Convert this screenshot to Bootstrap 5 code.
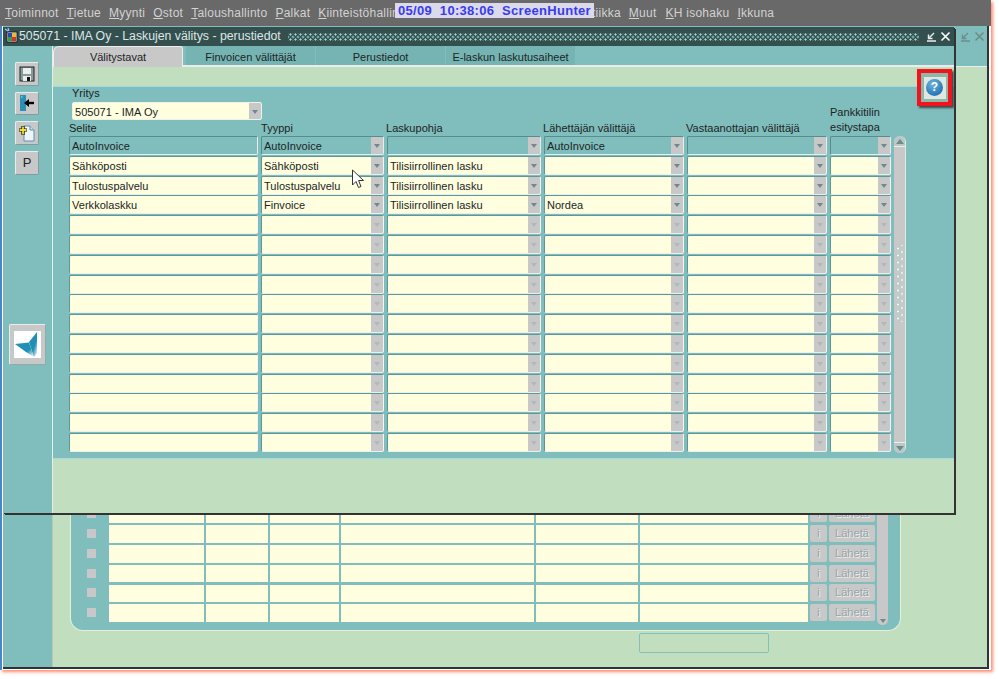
<!DOCTYPE html>
<html lang="fi">
<head>
<meta charset="utf-8">
<title>Laskujen välitys</title>
<link rel="stylesheet" href="https://cdn.jsdelivr.net/npm/bootstrap@5.3.0/dist/css/bootstrap.min.css">
<style>
:root{--teal:#80bdbd;--teal2:#76b4b4;--green:#c1dfbf;--cream:#ffffe0;--gray:#c8c8c8}
html,body{margin:0;background:#fff;overflow:hidden}
body{font-family:"Liberation Sans",Arial,sans-serif;font-size:11px;letter-spacing:.03px;color:#1c2424;width:999px;height:679px;position:relative}
.frame{width:991px;height:670px;box-shadow:2px 2px 3px #ff8a70;border-left:2px solid #4a86c8}
.menubar{height:26px;background:#696969;color:#d2d2d2;font-size:12px;line-height:27px;margin-left:-2px;padding-left:5px;letter-spacing:.25px;gap:8px}
.menubar u{text-decoration-thickness:1px;text-underline-offset:1px}
.menu-hide{margin-left:185px}
.menu-kh{margin-left:1px}
.hunter{position:absolute;left:395px;top:3px;width:199px;height:15px;background:#dadaea;color:#3a3af0;font-weight:700;font-size:13px;line-height:15px;white-space:pre;padding-left:3px;letter-spacing:.3px}
.backwin{margin:0 2px 0 1px;height:643px;border-right:2px solid #333;border-bottom:2px solid #333}
.win-title{height:20px;background:var(--teal)}
.back-strip{height:21px;background:var(--teal);border-bottom:1px solid #e8f0e8}
.win-btns{gap:3px;padding-right:3px}
.back-btns{gap:3px;padding-right:2px}
.win-btns svg{display:block}
.back-rail{width:50px;background:var(--teal);border-right:1px solid #b8c8b8}
.back-main{background:var(--green)}
.back-panel{margin-left:17px;width:831px;background:var(--teal);border:solid #e4f0d8;border-width:0 1px 1px 1px;border-radius:0 0 13px 13px;padding:0 0 6px 16px}
.back-grid{display:grid;grid-template-columns:20px 95px 62px 69px 193px 102px 168px 17px 46px 11px;column-gap:2px;grid-auto-rows:19.8px}
.bullet{width:9px;height:9px;background:var(--gray);margin-top:4px}
.bcell{background:var(--cream);height:17.6px;margin-top:.2px}
.bbtn{background:var(--gray);height:17px;border-radius:2px;font-size:11px;text-align:center;line-height:17px;color:#96a6a6;text-shadow:1px 1px 0 #eee}
.bscroll{grid-column:10;grid-row:1/span 6;background:var(--gray);border-radius:0 0 6px 6px;display:flex;flex-direction:column;justify-content:flex-end;align-items:center;margin-bottom:-1px}
.bempty{margin-left:586px;margin-top:2px;margin-bottom:14px;width:130px;height:20px;border:1px solid #84c0b8;border-radius:2px}
.frontwin{position:absolute;left:3px;top:27px;width:951px;height:486px;box-shadow:1px 1px 0 #333,2px 2px 0 #333}
.front-title{height:19px;background:#33504f;color:#dfe6e6;font-size:12.3px;letter-spacing:0;line-height:19px;padding-left:16px;gap:7px;position:relative}
.sysicon{position:absolute;left:1px;top:1px}
.dots{height:8px;background-image:radial-gradient(circle,#a4dcd8 0.9px,transparent 1.2px),radial-gradient(circle,#a4dcd8 0.9px,transparent 1.2px);background-size:5px 5px;background-position:0 -1px,2.5px 1.5px}
.front-body{height:467px}
.rail{width:50px;background:var(--teal);border-right:1px solid #e8eeee;padding:16px 0 0 12px;gap:6.2px}
.rbtn{width:24px;height:23.5px;padding:0;background:var(--gray);border:1px solid;border-color:#e6eeee #7f9d9d #7f9d9d #e6eeee;border-radius:2px;font-size:13px;line-height:20px;color:#222;--bs-btn-hover-bg:var(--gray)}
.rbtn svg{display:block;margin:1px auto}
.logo-btn{width:37px;height:41px;margin:143px 0 0 -6px;padding:0 4px;background:var(--gray);border:1px solid;border-color:#e6eeee #8fabab #8fabab #e6eeee;border-radius:2px;--bs-btn-hover-bg:var(--gray)}
.logo-btn svg{display:block;background:#fff}
.main-col{flex:1;background:var(--green);position:relative}
.tabbar{height:21px;background:var(--teal);border-bottom:2px solid #e8eeee;flex-wrap:nowrap;margin:0}
.tabbar .nav-link{height:19px;padding:0;line-height:22px;font-size:11px;letter-spacing:0;color:#1c2424;text-align:center;background:var(--teal2);border-radius:0;margin:0 1px 0 0;width:129px}
.tabbar .nav-link.active{background:var(--gray);width:130px;margin-right:3px;height:21px;border-top:1px solid #eee;border-left:1px solid #eee;border-right:1px solid #eee;border-radius:6px 3px 0 0;line-height:21px}
.green-strip{height:19px}
.panel-main{height:373px;background:var(--teal);border-top:1px solid #a8d8e0;border-bottom:1px solid #a8d8e0;padding:0 0 0 16px}
.fgrid{display:grid;grid-template-columns:189px 123px 154px 140px 140px 61px 12px;column-gap:3px;grid-template-rows:34px 15px;grid-auto-rows:19.8px}
.yr{grid-column:1/span 3;padding:0 0 0 3px}
.yr-label{height:15px;line-height:12px}
.lbl{line-height:15px;white-space:nowrap}
.lbl-m{margin-left:-1px}
.lbl-p{grid-column:6;grid-row:1/span 2;align-self:end;margin-bottom:1px}
.fld{height:19px;background:var(--cream);border:1px solid;border-color:#5d9898 #f4f4f0 #eeeeea #5d9898;border-radius:2px;line-height:17px;padding-left:2px;white-space:nowrap;overflow:hidden;display:flex;justify-content:space-between}
.fld.qry{background:var(--teal);border-color:#5a8c8c #e4eeee #e4eeee #5a8c8c}
.fld span{flex:1;padding-top:1px}
.drop{width:12px;background:var(--gray);flex:none;position:relative}
.drop:after{content:"";position:absolute;left:3px;top:7px;border:solid transparent;border-width:4px 3px 0;border-top-color:#6f8a8a}
.fld.idle .drop:after{border-top-color:#b2b8b8}
.yr .fld{width:190px;height:18px;border-color:#eef2e8}
.fscroll{grid-column:7;grid-row:3/span 16;background:var(--gray);height:317px;border-radius:6px;display:flex;flex-direction:column;position:relative;width:12px;border-right:1px solid #dceee0}
.sarrow{height:11px;display:flex;align-items:center;justify-content:center;background:#bcc8c8;border-radius:6px 6px 0 0;border-bottom:1px solid #eee}
.sarrow.dn{border-radius:0 0 6px 6px;border-bottom:0;border-top:1px solid #eee;margin-top:auto}
.sgrip{position:absolute;left:2px;top:109px;width:8px;height:77px;background-image:radial-gradient(circle,#f4ffff 1px,#8cc4c4 1.2px,transparent 1.7px),radial-gradient(circle,#f4ffff 1px,#8cc4c4 1.2px,transparent 1.7px);background-size:8px 7px;background-position:-2px 0,2px 3.5px}
.helpbox{position:absolute;right:2px;top:23px;width:35px;height:37px;border:4px solid #f0141c;background:#8cb8a8;box-shadow:2px 2px 2px #444;display:flex;align-items:center;justify-content:center;padding:0}
.helpin{width:22px;height:22px;background:#dfe8e0;display:flex;align-items:center;justify-content:center}
.helpc{width:17px;height:17px;border-radius:50%;background:radial-gradient(circle at 40% 30%,#6fb4e0,#2878b4 70%);color:#fff;font-weight:700;font-size:12px;line-height:17px;text-align:center;letter-spacing:0}
.pointer{position:absolute;left:351px;top:169px}
</style>
</head>
<body>
<div class="frame d-flex flex-column">
  <div class="menubar d-flex">
    <div><u>T</u>oiminnot</div><div><u>T</u>ietue</div><div><u>M</u>yynti</div><div><u>O</u>stot</div><div><u>T</u>aloushallinto</div><div><u>P</u>alkat</div><div><u>K</u>iinteistöhallin</div>
    <div class="menu-hide">tiikka</div><div><u>M</u>uut</div><div class="menu-kh"><u>K</u>H isohaku</div><div><u>I</u>kkuna</div>
  </div>
  <div class="backwin d-flex flex-column">
    <div class="win-title d-flex justify-content-end">
      <div class="win-btns back-btns d-flex align-items-center">
        <svg width="11" height="11" viewBox="0 0 11 11"><path d="M1 10h9M8 2L3.5 6.5M2.5 3.5V7.5H6.5" fill="none" stroke="#6f8c8c" stroke-width="1.4"/></svg>
        <svg width="11" height="11" viewBox="0 0 11 11"><path d="M1.5 1.5l8 8M9.5 1.5l-8 8" fill="none" stroke="#6f8c8c" stroke-width="1.6"/></svg>
      </div>
    </div>
    <div class="back-strip"></div>
    <div class="d-flex flex-grow-1">
      <div class="back-rail"></div>
      <div class="back-main flex-grow-1 d-flex flex-column justify-content-end">
        <div class="back-panel">
          <div class="back-grid" id="bgrid"></div>
        </div>
        <div class="bempty"></div>
      </div>
    </div>
  </div>
</div>

<div class="frontwin d-flex flex-column">
  <div class="front-title d-flex align-items-center">
    <svg class="sysicon" width="14" height="16" viewBox="0 0 14 16"><rect x="3" y="4" width="10" height="10" fill="#f4f0e0" stroke="#222"/><rect x="4" y="5" width="4" height="4" fill="#3040d0"/><rect x="8" y="9" width="4" height="4" fill="#d83030"/><rect x="8" y="5" width="4" height="4" fill="#e8c020"/><rect x="4" y="9" width="4" height="4" fill="#30a040"/><path d="M1 1l3 2M4 0l1 3" stroke="#9cf" stroke-width="1.2"/></svg>
    <span class="text-nowrap">505071 - IMA Oy - Laskujen välitys - perustiedot</span>
    <div class="dots flex-grow-1"></div>
    <div class="win-btns d-flex align-items-center">
      <svg width="11" height="11" viewBox="0 0 11 11"><path d="M1 10h9M8 2L3.5 6.5M2.5 3.5V7.5H6.5" fill="none" stroke="#e8eeee" stroke-width="1.4"/></svg>
      <svg width="11" height="11" viewBox="0 0 11 11"><path d="M1.5 1.5l8 8M9.5 1.5l-8 8" fill="none" stroke="#fff" stroke-width="1.6"/></svg>
    </div>
  </div>
  <div class="front-body d-flex">
    <div class="rail d-flex flex-column">
      <button class="btn rbtn" type="button"><svg width="18" height="18" viewBox="0 0 18 18"><rect x="2" y="2" width="14" height="14" fill="#8a9a9a" stroke="#222"/><rect x="5" y="3" width="8" height="6" fill="#e8f0ee"/><rect x="5" y="11" width="8" height="5" fill="#e8eee8"/><rect x="9" y="12" width="3" height="4" fill="#111"/></svg></button>
      <button class="btn rbtn" type="button"><svg width="18" height="18" viewBox="0 0 18 18"><rect x="2" y="1" width="6" height="16" fill="#2a90b8"/><rect x="3" y="2" width="1.5" height="2" fill="#5fd0a0"/><path d="M16 9H8" stroke="#000" stroke-width="2.4"/><path d="M6 9l5-4v8z" fill="#000"/></svg></button>
      <button class="btn rbtn" type="button"><svg width="18" height="18" viewBox="0 0 18 18"><path d="M6 2h6l4 4v11H6z" fill="#eef4f8" stroke="#5a90b0"/><path d="M12 2v4h4" fill="#cfe0ea" stroke="#5a90b0"/><path d="M5 2v9M1 6h8" stroke="#111" stroke-width="3.2"/><path d="M5 2.5v8M1.5 6h7" stroke="#f0e020" stroke-width="1.8"/></svg></button>
      <button class="btn rbtn" type="button">P</button>
      <button class="btn logo-btn" type="button" aria-label="logo"><svg width="27" height="27" viewBox="0 0 27 27"><defs><linearGradient id="fa" x1="0.3" y1="0.4" x2="0.9" y2="1"><stop offset="0.45" stop-color="#1f8fb4"/><stop offset="1" stop-color="#1f8fb4" stop-opacity=".1"/></linearGradient></defs><path d="M23 1L15 11L20 26L23 22Z" fill="url(#fa)"/><path d="M1 13L15 11.5L20 26L12 21Z" fill="url(#fa)"/></svg></button>
    </div>
    <div class="main-col">
      <ul class="nav tabbar">
        <li class="nav-item"><a class="nav-link active" href="#">Välitystavat</a></li>
        <li class="nav-item"><a class="nav-link" href="#">Finvoicen välittäjät</a></li>
        <li class="nav-item"><a class="nav-link" href="#">Perustiedot</a></li>
        <li class="nav-item"><a class="nav-link" href="#">E-laskun laskutusaiheet</a></li>
      </ul>
      <div class="green-strip"></div>
      <div class="panel-main">
        <div class="fgrid" id="fgrid">
          <div class="yr">
            <div class="yr-label">Yritys</div>
            <div class="fld"><span>505071 - IMA Oy</span><div class="drop"></div></div>
          </div>
          <div class="lbl lbl-p">Pankkitilin<br>esitystapa</div>
          <div class="lbl" style="grid-row:2;grid-column:1">Selite</div>
          <div class="lbl" style="grid-row:2;grid-column:2">Tyyppi</div>
          <div class="lbl lbl-m" style="grid-row:2;grid-column:3">Laskupohja</div>
          <div class="lbl lbl-m" style="grid-row:2;grid-column:4">Lähettäjän välittäjä</div>
          <div class="lbl lbl-m" style="grid-row:2;grid-column:5">Vastaanottajan välittäjä</div>
          <div class="fscroll">
            <div class="sarrow"><svg width="8" height="5" viewBox="0 0 8 5"><path d="M4 0l4 5H0z" fill="#6f8a8a"/></svg></div>
            <div class="sgrip"></div>
            <div class="sarrow dn"><svg width="8" height="5" viewBox="0 0 8 5"><path d="M4 5l4-5H0z" fill="#6f8a8a"/></svg></div>
          </div>
        </div>
      </div>
      <button class="helpbox" type="button" aria-label="Ohje"><div class="helpin"><div class="helpc">?</div></div></button>
    </div>
  </div>
</div>

<svg class="pointer" width="14" height="22" viewBox="0 0 14 22"><path d="M1.5 1v15l3.5-3.5 2.5 6 2.5-1-2.5-6h5z" fill="#fff" stroke="#333" stroke-width="1"/></svg>
<div class="hunter">05/09  10:38:06  ScreenHunter</div>

<script>
var rows=[["AutoInvoice","AutoInvoice","","AutoInvoice","",""],["Sähköposti","Sähköposti","Tilisiirrollinen lasku","","",""],["Tulostuspalvelu","Tulostuspalvelu","Tilisiirrollinen lasku","","",""],["Verkkolaskku","Finvoice","Tilisiirrollinen lasku","Nordea","",""]];
var g=document.getElementById('fgrid'),h='';
for(var r=0;r<16;r++){var d=rows[r]||["","","","","",""];
 for(var c=0;c<6;c++){h+='<div class="fld'+(r==0?' qry':'')+(r>3?' idle':'')+'" style="grid-row:'+(r+3)+';grid-column:'+(c+1)+'"><span>'+d[c]+'</span>'+(c?'<div class="drop"></div>':'')+'</div>';}}
g.insertAdjacentHTML('beforeend',h);
var b=document.getElementById('bgrid'),s='';
for(var r=0;r<6;r++){s+='<div class="bullet"></div>';for(var c=0;c<6;c++)s+='<div class="bcell"></div>';s+='<div class="bbtn">i</div><div class="bbtn">Lähetä</div>';}
s+='<div class="bscroll"><svg width="8" height="8" viewBox="0 0 8 8"><path d="M1 2h6L4 6z" fill="#6f8a8a"/></svg></div>';
b.innerHTML=s;
</script>
<script src="https://cdn.jsdelivr.net/npm/bootstrap@5.3.0/dist/js/bootstrap.bundle.min.js"></script>
</body>
</html>
